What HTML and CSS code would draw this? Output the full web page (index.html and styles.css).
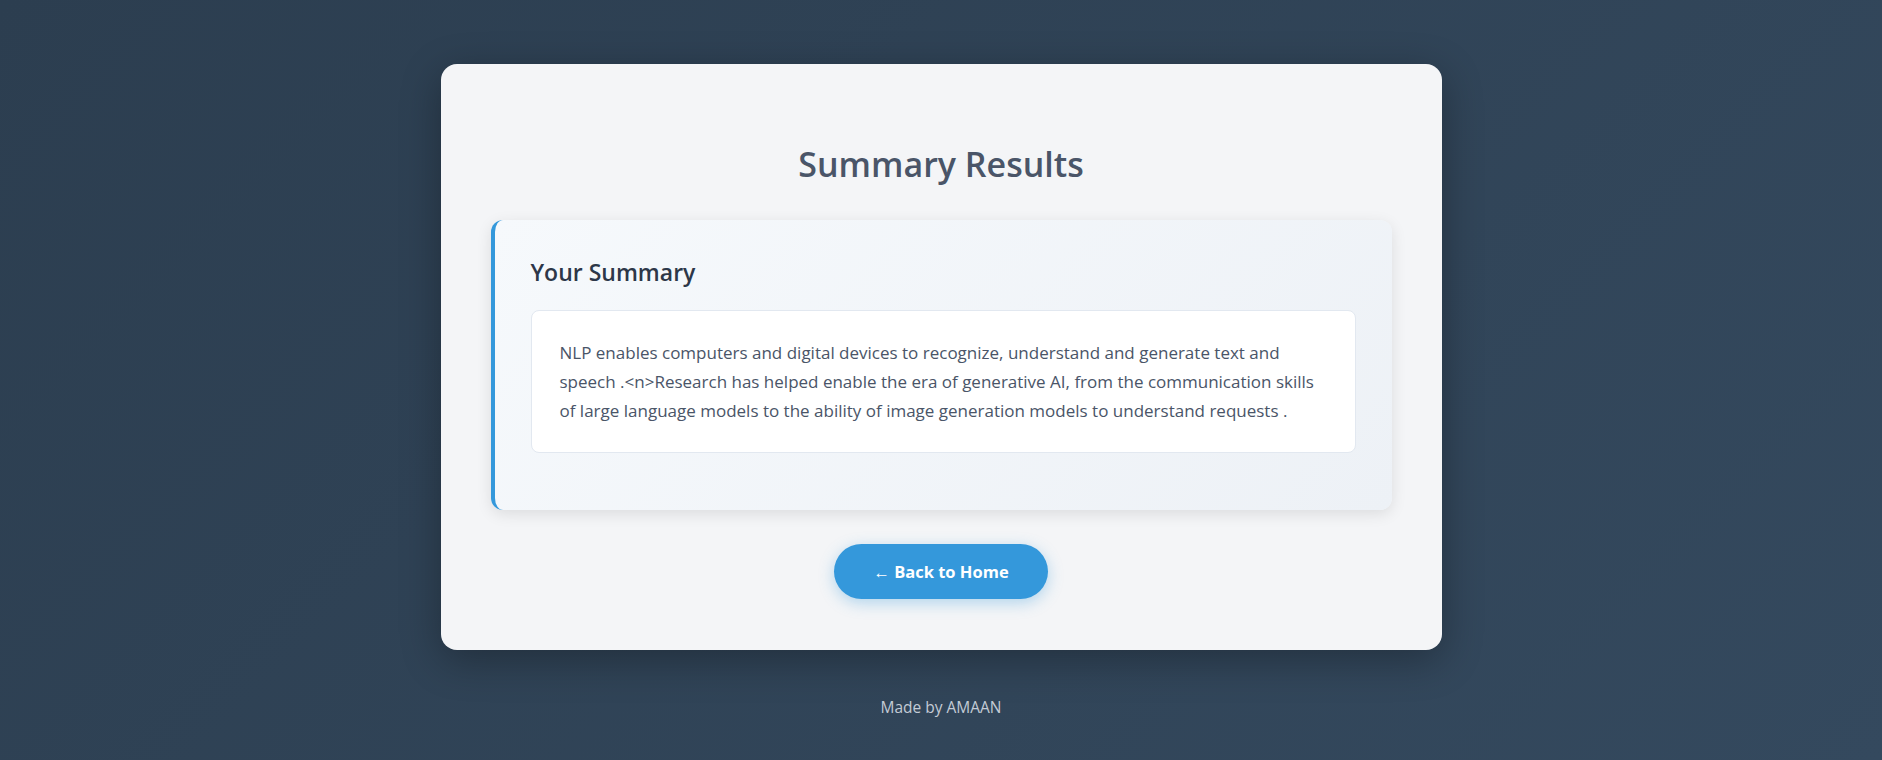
FILE: index.html
```html
<!DOCTYPE html>
<html lang="en">
<head>
<meta charset="utf-8">
<title>Summary Results</title>
<link rel="stylesheet" href="styles.css">
</head>
<body>
  <main class="card">
    <h1 class="title">Summary Results</h1>
    <section class="result">
      <h2 class="result-title">Your Summary</h2>
      <div class="result-text">
        <p>NLP enables computers and digital devices to recognize, understand and generate text and speech .&lt;n&gt;Research has helped enable the era of generative AI, from the communication skills of large language models to the ability of image generation models to understand requests .</p>
      </div>
    </section>
    <div class="actions">
      <a class="btn" href="#">← Back to Home</a>
    </div>
  </main>
  <footer class="footer">Made by AMAAN</footer>
</body>
</html>
```
FILE: styles.css
```css
* { box-sizing: border-box; }

html, body { height: 100%; }

body {
  margin: 0;
  min-height: 100vh;
  font-family: "Open Sans", "Noto Sans", sans-serif;
  background: linear-gradient(135deg, #2c3e50 0%, #34495e 100%);
  display: flex;
  flex-direction: column;
  align-items: center;
  padding-top: 64px;
}

.card {
  width: 1001px;
  background: #f4f5f7;
  border-radius: 16px;
  padding: 50px 50px 51px;
  box-shadow: 0 10px 40px rgba(0, 0, 0, 0.3);
}

.title {
  margin: 26px 0 32px;
  text-align: center;
  font-size: 34px;
  line-height: 48px;
  font-weight: 600;
  color: #4a5568;
}

.result {
  background: linear-gradient(135deg, #f6f9fc 0%, #edf1f6 100%);
  border-left: 4px solid #3498db;
  border-radius: 12px;
  padding: 37px 36px 57px;
  box-shadow: 0 4px 15px rgba(0, 0, 0, 0.1);
}

.result-title {
  margin: 0 0 22px;
  font-size: 23px;
  line-height: 31px;
  font-weight: 600;
  color: #2d3748;
}

.result-text {
  background: #ffffff;
  border: 1px solid #e2e8f0;
  border-radius: 8px;
  padding: 27px 28px;
}

.result-text p {
  margin: 0;
  font-size: 17px;
  line-height: 29px;
  color: #4a5568;
}

.actions {
  display: flex;
  justify-content: center;
  margin-top: 34px;
}

.btn {
  display: inline-block;
  padding: 16px 39px;
  line-height: 23px;
  font-size: 16.5px;
  font-weight: 700;
  color: #ffffff;
  text-decoration: none;
  background: #3498db;
  border-radius: 30px;
  box-shadow: 0 4px 15px rgba(52, 152, 219, 0.35);
}

.footer {
  margin-top: 46px;
  font-size: 15.5px;
  color: #c3cbd5;
}
```
